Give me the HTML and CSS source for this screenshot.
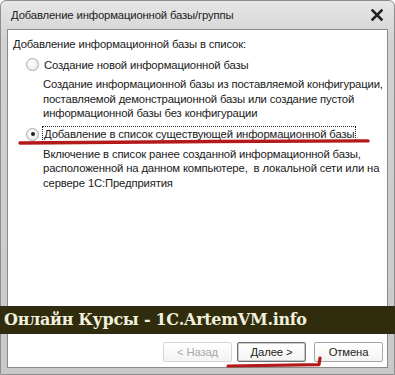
FILE: index.html
```html
<!DOCTYPE html>
<html lang="ru">
<head>
<meta charset="utf-8">
<title>Добавление информационной базы/группы</title>
<link rel="stylesheet" href="styles.css">
</head>
<body>
<div class="window">
  <div class="titlebar">
    <span class="title">Добавление информационной базы/группы</span>
    <svg class="close" width="12" height="12" viewBox="0 0 12 12"><path d="M1.5 1.5 L10.5 10.5 M10.5 1.5 L1.5 10.5" stroke="#222" stroke-width="2.6" stroke-linecap="square"/></svg>
  </div>
  <div class="client">
    <div class="content">
      <div class="heading">Добавление информационной базы в список:</div>
      <div class="option">
        <span class="radio"></span>
        <span class="label">Создание новой информационной базы</span>
      </div>
      <div class="desc">Создание информационной базы из поставляемой конфигурации,<br>поставляемой демонстрационной базы или создание пустой<br>информационной базы без конфигурации</div>
      <div class="option">
        <span class="radio checked"></span>
        <span class="label focus">Добавление в список существующей информационной базы</span>
      </div>
      <div class="desc">Включение в список ранее созданной информационной базы,<br>расположенной на данном компьютере,&nbsp; в локальной сети или на<br>сервере 1С:Предприятия</div>
    </div>
    <div class="buttons">
      <button class="btn disabled">&lt; Назад</button>
      <button class="btn default">Далее &gt;</button>
      <button class="btn cancel">Отмена</button>
    </div>
  </div>
  <div class="banner">Онлайн Курсы - 1С.ArtemVM.info</div>
  <svg class="mark mark1" width="395" height="10" viewBox="0 0 395 10"><path d="M20 6 C 120 4.7, 260 4.1, 368 3.9" stroke="#b51a1a" stroke-width="3.4" fill="none" stroke-linecap="round"/></svg>
  <svg class="mark mark2" width="110" height="20" viewBox="0 0 110 20"><path d="M4 16 C 40 15.5, 70 15, 95 14.6 L 96 8" stroke="#b51a1a" stroke-width="3.2" fill="none" stroke-linecap="round" stroke-linejoin="round"/></svg>
</div>
</body>
</html>
```
FILE: styles.css
```css
html, body {
  margin: 0;
  padding: 0;
  background: #fff;
}
.window {
  position: relative;
  width: 395px;
  height: 375px;
  box-sizing: border-box;
  display: flex;
  flex-direction: column;
  padding: 0 6px 6px 6px;
  background: linear-gradient(#e6e6e6, #d2d2d2 40px, #c9c9c9);
  border: 1px solid #8e8e8e;
  border-radius: 6px 6px 0 0;
  font-family: "Liberation Sans", Arial, sans-serif;
  font-size: 11.3px;
  letter-spacing: -0.15px;
  color: #1a1a1a;
}
.titlebar {
  height: 28px;
  flex: none;
  display: flex;
  align-items: center;
  justify-content: space-between;
  padding: 0 3px 0 4px;
}
.title {
  color: #222;
}
.close {
  margin-right: 2px;
}
.client {
  flex: 1;
  background: #fff;
  border: 1px solid #8a8a8a;
  display: flex;
  flex-direction: column;
}
.content {
  flex: 1;
  padding: 7px 6px 0 5px;
}
.heading {
  line-height: 14px;
  margin-bottom: 5px;
}
.option {
  display: flex;
  align-items: center;
  margin-left: 13px;
  height: 17px;
}
.radio {
  box-sizing: border-box;
  width: 13px;
  height: 13px;
  border-radius: 50%;
  border: 1px solid #aaaaaa;
  background: radial-gradient(circle at 40% 40%, #ffffff, #e4e4e4);
  margin-right: 3px;
  position: relative;
  flex: none;
}
.radio.checked::after {
  content: "";
  position: absolute;
  left: 3.5px;
  top: 3.5px;
  width: 4px;
  height: 4px;
  border-radius: 50%;
  background: #222;
}
.label {
  padding: 0 1px;
  line-height: 14px;
  border: 1px dotted transparent;
}
.label.focus {
  border-color: #222;
}
.desc {
  margin: 4px 0 5px 30px;
  line-height: 14.5px;
  white-space: nowrap;
}
.buttons {
  display: flex;
  justify-content: flex-end;
  gap: 5px;
  padding: 0 4px 5px 0;
}
.btn {
  width: 69px;
  height: 20px;
  font-family: "Liberation Sans", Arial, sans-serif;
  font-size: 11.3px;
  letter-spacing: -0.15px;
  background: linear-gradient(#ffffff, #f3f3f3);
  border: 1px solid #a6a6a6;
  border-radius: 2px;
  color: #222;
  padding: 0;
}
.btn.disabled {
  color: #a8a8a8;
  border-color: #d6d6d6;
}
.btn.default {
  border-color: #707070;
  box-shadow: inset 0 0 0 1px #c8c8c8;
}
.btn.cancel {
  margin-left: 3px;
}
.banner {
  position: absolute;
  left: -1px;
  right: -1px;
  top: 305px;
  height: 28px;
  background: #2f2d0d;
  color: #f2efdc;
  font-family: "DejaVu Serif", "Liberation Serif", serif;
  font-weight: bold;
  font-size: 16px;
  letter-spacing: -0.3px;
  line-height: 28px;
  padding-left: 4px;
}
.mark {
  position: absolute;
  pointer-events: none;
}
.mark1 {
  left: -1px;
  top: 136px;
}
.mark2 {
  left: 223px;
  top: 349px;
}
```
